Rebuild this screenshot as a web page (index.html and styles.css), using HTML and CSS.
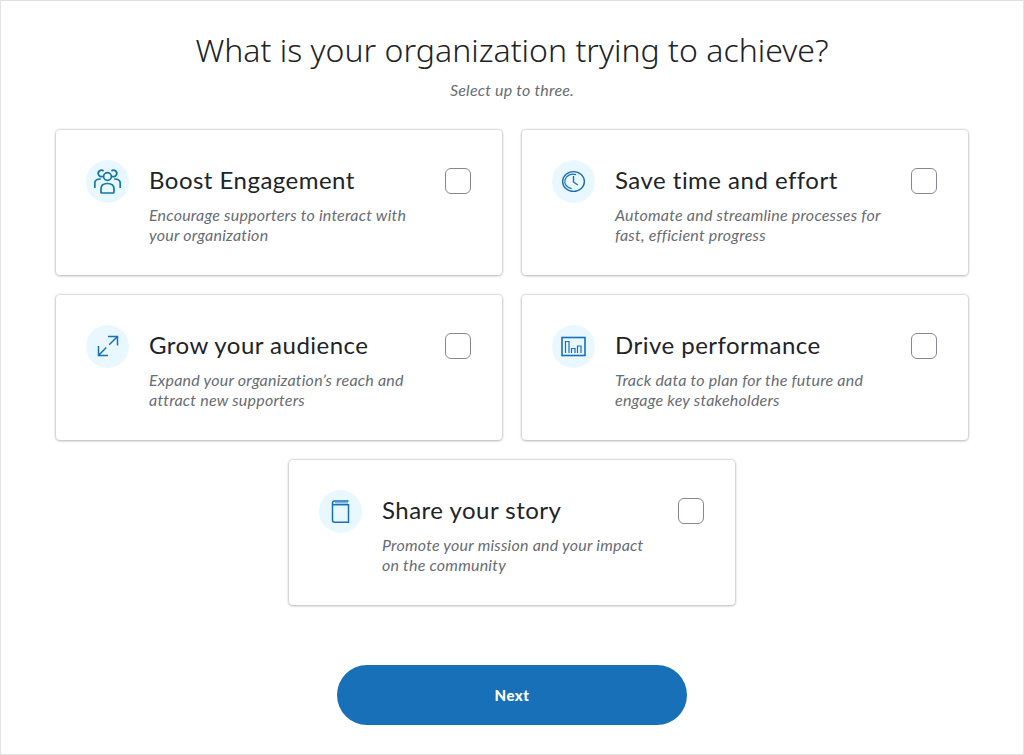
FILE: index.html
```html
<!DOCTYPE html>
<html lang="en">
<head>
<meta charset="utf-8">
<title>Organization goals</title>
<link rel="stylesheet" href="styles.css">
</head>
<body>
<main class="page">
  <h1 class="title">What is your organization trying to achieve?</h1>
  <p class="hint">Select up to three.</p>
  <div class="cards">
    <label class="card">
      <span class="icon icon-teal"><svg viewBox="0 0 43 43"><path d="M17 16.2A3.2 3.2 0 1 1 17.6 11M26 16.2A3.2 3.2 0 1 0 25.400 11"/><circle cx="21.500" cy="16.500" r="3.900"/><path d="M15 33V29c0-3.800 3-5.500 6.500-5.500s6.500 1.700 6.500 5.500v3q0 1-1 1H16q-1 0-1-1M8.800 28v-5c0-2.500 2.200-4 6-4M34.200 28v-5c0-2.500-2.200-4-6-4"/></svg></span>
      <span class="body"><span class="name">Boost Engagement</span><span class="desc">Encourage supporters to interact with<br>your organization</span></span>
      <input class="check" type="checkbox">
    </label>
    <label class="card">
      <span class="icon"><svg viewBox="0 0 43 43" stroke-width="1.400"><ellipse cx="21.500" cy="21.500" rx="10.900" ry="9.900"/><path stroke-width="1.200" d="M24 14.600A8.200 7.300 0 1 0 19.700 28.600"/><path d="M21.500 16v6l4.300 3"/></svg></span>
      <span class="body"><span class="name">Save time and effort</span><span class="desc">Automate and streamline processes for<br>fast, efficient progress</span></span>
      <input class="check" type="checkbox">
    </label>
    <label class="card">
      <span class="icon"><svg viewBox="0 0 43 43" stroke-width="1.500"><path d="M23.200 19.800L31.500 11.500M22 11.500h9.500v9M20.300 22.500L12.500 30.500M12.500 21v9.500h9.500"/></svg></span>
      <span class="body"><span class="name">Grow your audience</span><span class="desc">Expand your organization’s reach and<br>attract new supporters</span></span>
      <input class="check" type="checkbox">
    </label>
    <label class="card">
      <span class="icon"><svg viewBox="0 0 43 43" stroke-width="1.600"><rect x="10" y="12.500" width="23" height="18"/><path stroke-width="1.200" d="M13.500 28V16.500h3.500V28M19.500 28v-4.500h3.500V28M25.500 28v-7h3.500v7"/></svg></span>
      <span class="body"><span class="name">Drive performance</span><span class="desc">Track data to plan for the future and<br>engage key stakeholders</span></span>
      <input class="check" type="checkbox">
    </label>
    <label class="card">
      <span class="icon"><svg viewBox="0 0 43 43" stroke-width="1.500"><path d="M29.500 11H15.500a2 2 0 0 0-2 2v17.200a2 2 0 0 0 2 2h14V14.800H15.500a1.800 1.800 0 0 1-2-1.800"/><path stroke-width=".8" d="M16 12.900h13"/></svg></span>
      <span class="body"><span class="name">Share your story</span><span class="desc">Promote your mission and your impact<br>on the community</span></span>
      <input class="check" type="checkbox">
    </label>
  </div>
  <button class="next">Next</button>
</main>
</body>
</html>
```
FILE: styles.css
```css
* { box-sizing: border-box; }
body { margin: 0; background: #fff; font-family: Lato, "Noto Sans", sans-serif; color: #212327; }
.page { width: 1024px; height: 755px; border: 1px solid #e1e1e1; padding-top: 28px; display: flex; flex-direction: column; align-items: center; }
.title { margin: 0; font-family: "Noto Sans", sans-serif; font-size: 32px; line-height: 42px; font-weight: 300; letter-spacing: .02px; white-space: nowrap; }
.hint { margin: 9px 0 0; font-size: 16px; line-height: 20px; letter-spacing: .22px; font-style: italic; color: #686c73; }
.cards { margin-top: 30px; width: 912px; display: flex; flex-wrap: wrap; justify-content: center; gap: 20px; }
.card { width: 446px; height: 145px; padding: 30px; display: flex; align-items: flex-start; border-radius: 4px; background: #fff; box-shadow: 0 0 2px 1px rgba(0,0,0,.14), 0 1px 3px rgba(0,0,0,.17); }
.icon { width: 43px; height: 43px; flex: none; margin-right: 20px; border-radius: 50%; background: #e9f8ff; }
.icon svg { display: block; width: 43px; height: 43px; fill: none; stroke: #1870b8; }
.icon-teal svg { stroke: #0f78a5; stroke-width: 1.7; }
.body { flex: 1; display: flex; flex-direction: column; white-space: nowrap; }
.name { align-self: flex-start; font-size: 24px; line-height: 32px; margin-top: 4px; letter-spacing: .48px; }
.desc { margin-top: 9px; font-size: 16px; line-height: 20px; letter-spacing: .22px; font-style: italic; color: #686c73; }
.check { appearance: none; flex: none; width: 26px; height: 26px; margin: 8px 1px 0 0; border: 1px solid #85888f; border-radius: 6px; background: #fff; }
.next { margin-top: 60px; padding: 0; width: 350px; height: 60px; border: 0; border-radius: 30px; background: #1870b8; color: #fff; font: 900 15px Lato, sans-serif; letter-spacing: .5px; }
```
